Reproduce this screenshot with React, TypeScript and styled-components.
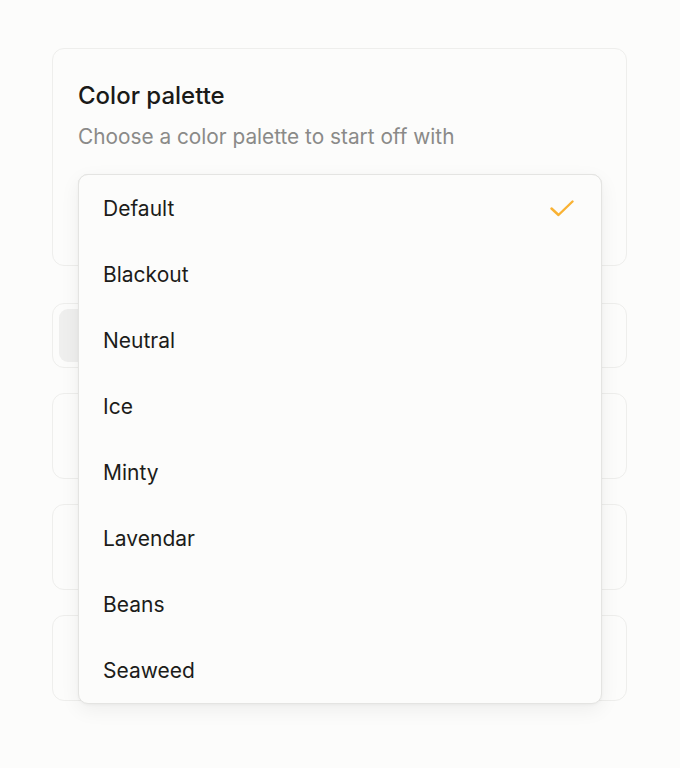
import React, { useState } from 'react';
import styled, { createGlobalStyle } from 'styled-components';

const GlobalStyle = createGlobalStyle`
  html, body {
    margin: 0;
    padding: 0;
    background: #fcfcfb;
    font-family: Inter, "Liberation Sans", sans-serif;
    color: #1c1c1a;
  }
`;

const Page = styled.div`
  width: 627px;
  min-height: 768px;
  box-sizing: border-box;
  padding: 48px 0 60px 52px;
  display: flex;
  flex-direction: column;
`;

const Card = styled.div<{ $height: number; $gap: number }>`
  box-sizing: border-box;
  position: relative;
  flex-shrink: 0;
  height: ${p => p.$height}px;
  margin-bottom: ${p => p.$gap}px;
  border: 1px solid #eeeeec;
  border-radius: 12px;
  background: #fcfcfb;
`;

const PaletteBody = styled.div`
  padding: 29px 24px 0 25px;
  display: flex;
  flex-direction: column;
`;

const Title = styled.h2`
  margin: 0;
  font-size: 24px;
  line-height: 36px;
  font-weight: 500;
  color: #1a1a18;
`;

const Subtitle = styled.p`
  margin: 9px 0 0;
  font-size: 20.8px;
  line-height: 28px;
  color: #8a8a88;
`;

const SelectAnchor = styled.div`
  position: relative;
  margin-top: 23px;
`;

const Trigger = styled.div`
  box-sizing: border-box;
  height: 50px;
  border: 1px solid #e6e6e4;
  border-radius: 10px;
`;

const Menu = styled.ul`
  position: absolute;
  top: 0;
  left: 0;
  right: 0;
  margin: 0;
  padding: 0;
  list-style: none;
  background: #fcfcfb;
  border: 1px solid #e4e4e2;
  border-radius: 10px;
  box-shadow: 0 6px 20px rgba(0, 0, 0, 0.06), 0 1px 3px rgba(0, 0, 0, 0.04);
  z-index: 10;
`;

const Item = styled.li`
  height: 66px;
  display: flex;
  align-items: center;
  justify-content: space-between;
  padding: 0 27px 0 24px;
  font-size: 21px;
  color: #1c1c1a;
  cursor: pointer;
`;

const Segmented = styled.div`
  position: absolute;
  left: 6px;
  top: 5px;
  bottom: 5px;
  width: 260px;
  background: #efefee;
  border-radius: 9px;
`;

const Check = () => (
  <svg width="24" height="17" viewBox="0 0 24 17" fill="none">
    <polyline
      points="1.5,8.5 8.5,15 22.5,1.5"
      stroke="#f9b233"
      strokeWidth="2.4"
      strokeLinecap="round"
      strokeLinejoin="round"
    />
  </svg>
);

const palettes = ['Default', 'Blackout', 'Neutral', 'Ice', 'Minty', 'Lavendar', 'Beans', 'Seaweed'];

export default function App() {
  const [selected, setSelected] = useState('Default');

  return (
    <>
      <GlobalStyle />
      <Page>
        <Card $height={218} $gap={37}>
          <PaletteBody>
            <Title>Color palette</Title>
            <Subtitle>Choose a color palette to start off with</Subtitle>
            <SelectAnchor>
              <Trigger />
              <Menu>
                {palettes.map(name => (
                  <Item key={name} onClick={() => setSelected(name)}>
                    {name}
                    {selected === name && <Check />}
                  </Item>
                ))}
              </Menu>
            </SelectAnchor>
          </PaletteBody>
        </Card>
        <Card $height={65} $gap={25}>
          <Segmented />
        </Card>
        <Card $height={86} $gap={25} />
        <Card $height={86} $gap={25} />
        <Card $height={86} $gap={0} />
      </Page>
    </>
  );
}
